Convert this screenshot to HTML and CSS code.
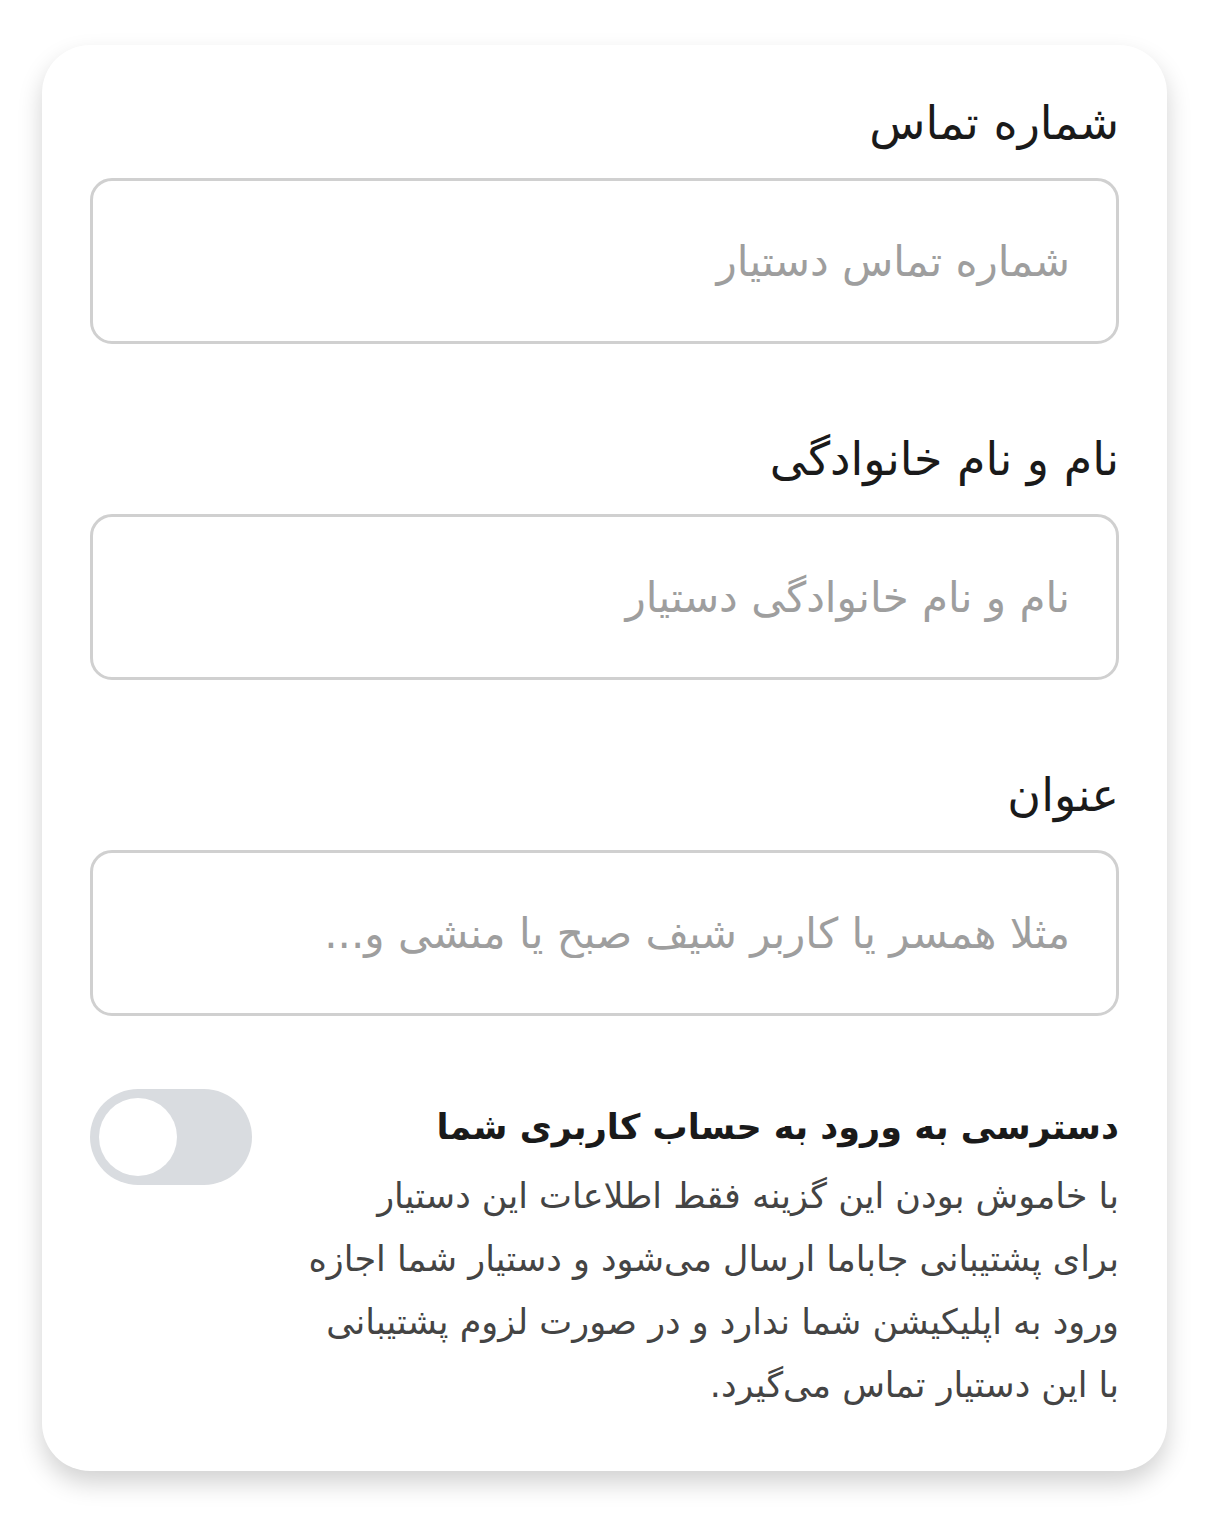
FILE: index.html
```html
<!DOCTYPE html>
<html lang="fa" dir="rtl">
<head>
    <meta charset="UTF-8">
    <meta name="viewport" content="width=device-width, initial-scale=1.0">
    <title>افزودن دستیار</title>
    <link rel="stylesheet" href="styles.css">
</head>
<body>
    <div class="card">
        <div class="fields">
            <div class="field">
                <label for="phone">شماره تماس</label>
                <input type="text" id="phone" placeholder="شماره تماس دستیار">
            </div>

            <div class="field">
                <label for="fullname">نام و نام خانوادگی</label>
                <input type="text" id="fullname" placeholder="نام و نام خانوادگی دستیار">
            </div>

            <div class="field">
                <label for="title">عنوان</label>
                <input type="text" id="title" placeholder="مثلا همسر یا کاربر شیف صبح یا منشی و...">
            </div>
        </div>

        <div class="access">
            <div class="access-text">
                <h2>دسترسی به ورود به حساب کاربری شما</h2>
                <p>با خاموش بودن این گزینه فقط اطلاعات این دستیار<br>
                برای پشتیبانی جاباما ارسال می‌شود و دستیار شما اجازه<br>
                ورود به اپلیکیشن شما ندارد و در صورت لزوم پشتیبانی<br>
                با این دستیار تماس می‌گیرد.</p>
            </div>
            <label class="switch">
                <input type="checkbox" id="access">
                <span class="slider"></span>
            </label>
        </div>
    </div>
</body>
</html>
```

FILE: styles.css
```css
body {
    margin: 0;
    padding: 45px 42px;
    background: #fff;
    font-family: 'DejaVu Sans', 'Noto Sans', sans-serif;
    color: #1a1a1a;
}

.card {
    background: #fff;
    border-radius: 48px;
    box-shadow: 0 12px 24px rgba(0, 0, 0, 0.18);
    padding: 48px 48px 54px;
}

.fields {
    display: flex;
    flex-direction: column;
    gap: 85px;
}

.field {
    display: flex;
    flex-direction: column;
}

.field label {
    font-size: 46px;
    line-height: 60px;
    margin-bottom: 25px;
    color: #1a1a1a;
}

.field input {
    height: 166px;
    box-sizing: border-box;
    border: 3px solid #d0d0d0;
    border-radius: 22px;
    padding: 0 46px;
    font-family: inherit;
    font-size: 42px;
    color: #1a1a1a;
    outline: none;
    background: #fff;
}

.field input::placeholder {
    color: #9e9e9e;
}

/* toggle row: description on the right, switch on the left */
.access {
    display: flex;
    align-items: flex-start;
    gap: 24px;
    margin-top: 73px;
}

.access-text {
    flex: 1;
    padding-top: 8px;
}

.access-text h2 {
    margin: 0 0 8px;
    font-size: 35px;
    line-height: 60px;
    font-weight: bold;
    color: #1a1a1a;
}

.access-text p {
    margin: 0;
    font-size: 35px;
    line-height: 63px;
    color: #444;
}

.switch {
    position: relative;
    width: 162px;
    height: 96px;
    flex-shrink: 0;
}

.switch input {
    display: none;
}

.slider {
    position: absolute;
    inset: 0;
    background: #d9dce0;
    border-radius: 48px;
}

.slider::before {
    content: "";
    position: absolute;
    top: 9px;
    right: 75px;
    width: 78px;
    height: 78px;
    border-radius: 50%;
    background: #fff;
}
```
